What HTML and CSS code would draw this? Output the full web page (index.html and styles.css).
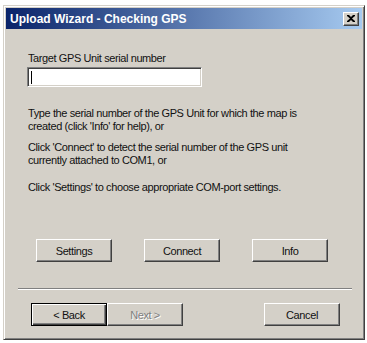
FILE: index.html
```html
<!DOCTYPE html>
<html>
<head>
<meta charset="utf-8">
<link rel="stylesheet" href="styles.css">
</head>
<body>
<div class="window">
  <div class="titlebar">
    <span class="title">Upload Wizard - Checking GPS</span>
    <span class="close">
      <svg width="8" height="7" viewBox="0 0 8 7"><path d="M0 0h2l2 2 2-2h2v1L5 3.5 8 6v1H6L4 5 2 7H0V6l3-2.5L0 1z" fill="#000"/></svg>
    </span>
  </div>
  <div class="top">
    <div class="label">Target GPS Unit serial number</div>
    <div class="input"><span class="caret"></span></div>
    <p class="p1">Type the serial number of the GPS Unit for which the map is<br>created (click 'Info' for help), or</p>
    <p class="p2">Click 'Connect' to detect the serial number of the GPS unit<br>currently attached to COM1, or</p>
    <p class="p3">Click 'Settings' to choose appropriate COM-port settings.</p>
    <div class="row">
      <div class="btn">Settings</div>
      <div class="btn">Connect</div>
      <div class="btn">Info</div>
    </div>
  </div>
  <div class="sep"></div>
  <div class="nav">
    <div class="btn default">&lt; Back</div>
    <div class="btn disabled">Next &gt;</div>
    <div class="btn cancel">Cancel</div>
  </div>
</div>
</body>
</html>
```
FILE: styles.css
```css
html, body {
  margin: 0;
  padding: 0;
  background: #ffffff;
}
body {
  font-family: "Liberation Sans", Arial, sans-serif;
  font-size: 11px;
  letter-spacing: -0.4px;
  color: #111;
}
.window {
  box-sizing: border-box;
  margin: 5px 0 0 3px;
  width: 362px;
  height: 335px;
  background: #d4d0c8;
  border: 1px solid;
  border-color: #d4d0c8 #404040 #404040 #d4d0c8;
  box-shadow: inset 1px 1px 0 #ffffff, inset -1px -1px 0 #808080;
  padding: 2px;
}
.titlebar {
  height: 21px;
  background: linear-gradient(to right, #0a246a, #a6caf0);
  display: flex;
  align-items: center;
  justify-content: space-between;
  padding: 0 3px 0 4px;
}
.title {
  color: #fff;
  font-weight: bold;
  font-size: 12px;
  letter-spacing: 0;
}
.close {
  box-sizing: border-box;
  width: 16px;
  height: 14px;
  background: #d4d0c8;
  border: 1px solid;
  border-color: #ffffff #404040 #404040 #ffffff;
  box-shadow: inset -1px -1px 0 #808080;
  display: flex;
  align-items: center;
  justify-content: center;
}
.top {
  padding: 23px 0 0 22px;
}
.label {
  line-height: 13px;
}
.input {
  box-sizing: border-box;
  margin: 2px 0 0 -1px;
  width: 175px;
  height: 20px;
  background: #fff;
  border: 1px solid;
  border-color: #808080 #ffffff #ffffff #808080;
  box-shadow: inset 1px 1px 0 #404040, inset -1px -1px 0 #d4d0c8;
  padding: 3px 0 0 3px;
}
.caret {
  display: block;
  width: 1px;
  height: 13px;
  background: #000;
}
p {
  margin: 0;
  line-height: 13px;
}
.p1 { margin-top: 20px; }
.p2 { margin-top: 8px; }
.p3 { margin-top: 14px; }
.row {
  display: flex;
  gap: 32px;
  margin: 45px 0 0 8px;
}
.btn {
  box-sizing: border-box;
  width: 76px;
  height: 23px;
  background: #d4d0c8;
  border: 1px solid;
  border-color: #ffffff #404040 #404040 #ffffff;
  box-shadow: inset -1px -1px 0 #808080;
  display: flex;
  align-items: center;
  justify-content: center;
}
.sep {
  margin: 26px 10px 0 12px;
  height: 1px;
  background: #808080;
  border-bottom: 1px solid #ffffff;
}
.nav {
  display: flex;
  margin-top: 13px;
  padding: 0 22px 0 25px;
}
.btn.default {
  border: 1px solid #000;
  box-shadow: inset 1px 1px 0 #ffffff, inset -1px -1px 0 #404040, inset -2px -2px 0 #808080;
}
.btn.disabled {
  color: #808080;
  text-shadow: 1px 1px 0 #ffffff;
}
.btn.cancel {
  margin-left: auto;
}
```
